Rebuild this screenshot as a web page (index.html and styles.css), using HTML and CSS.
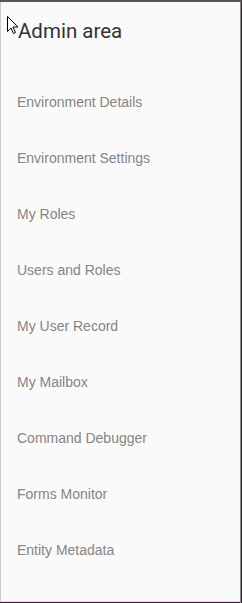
FILE: index.html
```html
<!DOCTYPE html>
<html lang="en">
<head>
    <meta charset="UTF-8">
    <title>Admin area</title>
    <link rel="stylesheet" href="styles.css">
</head>
<body>
    <div class="backdrop">
        <!-- Side panel -->
        <div class="panel">
            <h1 class="title">Admin area</h1>
            <ul class="menu">
                <li><a href="#">Environment Details</a></li>
                <li><a href="#">Environment Settings</a></li>
                <li><a href="#">My Roles</a></li>
                <li><a href="#">Users and Roles</a></li>
                <li><a href="#">My User Record</a></li>
                <li><a href="#">My Mailbox</a></li>
                <li><a href="#">Command Debugger</a></li>
                <li><a href="#">Forms Monitor</a></li>
                <li><a href="#">Entity Metadata</a></li>
            </ul>
        </div>
        <div class="edge"></div>
    </div>

    <!-- mouse pointer -->
    <svg class="cursor" width="12" height="19" viewBox="0 0 12 19">
        <path d="M0.5 0.5 L0.5 15.5 L4 12 L6.5 17.5 L8.5 16.5 L6 11 L11 11 Z" fill="#fff" stroke="#000" stroke-width="1"/>
    </svg>
</body>
</html>
```

FILE: styles.css
```css
body { margin: 0; background: #3b1f3a; font-family: "Liberation Sans", Arial, sans-serif; overflow: hidden; }

.backdrop { display: flex; height: 603px; border-top: 2px solid #555; box-sizing: border-box; }

/* Panel */
.panel { width: 240px; height: 600px; background: #fafafa; border-left: 1px solid #ccc; border-bottom: 1px solid #ddd; box-sizing: border-box; }

.edge { flex: 1; background: #3b1f3a; border-left: 1px solid #8a8a8a; }

.title { margin: 0; padding: 17px 0 0 17px; font-family: Roboto, sans-serif; font-weight: 400; font-size: 20.5px; color: #333; line-height: 24px; }

.menu { list-style: none; margin: 0; padding: 31px 0 0 0; }
.menu li { height: 56px; display: flex; align-items: center; }
.menu a { padding-left: 16px; font-size: 14px; color: #858585; text-decoration: none; }

.cursor { position: absolute; left: 7px; top: 16px; }
```
